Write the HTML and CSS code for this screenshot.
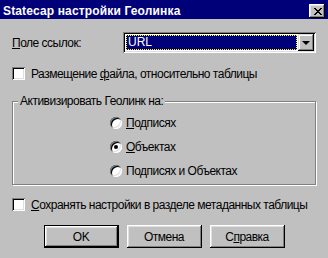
FILE: index.html
```html
<!DOCTYPE html>
<html lang="ru">
<head>
<meta charset="utf-8">
<title>Statecap настройки Геолинка</title>
<link rel="stylesheet" href="styles.css">
</head>
<body>
<div class="dialog">
  <div class="titlebar">
    <span class="title">Statecap настройки Геолинка</span>
    <span class="close">
      <svg width="8" height="7" viewBox="0 0 8 7"><path d="M0 0h2v1h1v1h2v-1h1v-1h2v1h-1v1h-1v1h-1v1h1v1h1v1h1v1h-2v-1h-1v-1h-2v1h-1v1h-2v-1h1v-1h1v-1h1v-1h-1v-1h-1v-1h-1z" fill="#000"/></svg>
    </span>
  </div>
  <div class="content">
    <div class="field-row">
      <span class="field-label"><u>П</u>оле ссылок:</span>
      <div class="combo">
        <div class="combo-value"><span class="sel">URL</span></div>
        <span class="combo-btn"><span class="arrow"></span></span>
      </div>
    </div>
    <div class="check-row first">
      <span class="checkbox"></span>
      <span>Размещение <u>ф</u>айла, относительно таблицы</span>
    </div>
    <div class="group">
      <span class="group-label">Активизировать Геолинк на:</span>
      <div class="radio-row"><span class="radio"></span><span><u>П</u>одписях</span></div>
      <div class="radio-row"><span class="radio checked"></span><span><u>О</u>бъектах</span></div>
      <div class="radio-row"><span class="radio"></span><span>Подписях и Объектах</span></div>
    </div>
    <div class="check-row second">
      <span class="checkbox"></span>
      <span><u>С</u>охранять настройки в разделе метаданных таблицы</span>
    </div>
    <div class="buttons">
      <span class="btn default">OK</span>
      <span class="btn">Отмена</span>
      <span class="btn">С<u>п</u>равка</span>
    </div>
  </div>
</div>
</body>
</html>
```

FILE: styles.css
```css
html, body {
  margin: 0;
  padding: 0;
}
body {
  width: 328px;
  height: 258px;
  overflow: hidden;
  background: #c0c0c0;
  font-family: "Liberation Sans", Arial, sans-serif;
  font-size: 12px;
  letter-spacing: -0.5px;
  color: #000;
}
u {
  text-decoration: underline;
  text-underline-offset: 1px;
}
.dialog {
  width: 328px;
  height: 258px;
  display: flex;
  flex-direction: column;
  background: #c0c0c0;
}
.titlebar {
  height: 19px;
  box-sizing: border-box;
  padding: 3px 3px 0 3px;
  background: #000078;
  display: flex;
  align-items: center;
  justify-content: space-between;
}
.title {
  color: #fff;
  font-weight: bold;
  font-size: 12px;
  letter-spacing: 0.15px;
  line-height: 14px;
}
.close {
  width: 16px;
  height: 14px;
  box-sizing: border-box;
  background: #c0c0c0;
  box-shadow: inset -1px -1px 0 #000, inset 1px 1px 0 #fff, inset -2px -2px 0 #808080, inset 2px 2px 0 #dfdfdf;
  display: flex;
  align-items: center;
  justify-content: center;
  padding-left: 1px;
}
.close svg {
  display: block;
}
.content {
  padding: 0 12px;
  display: flex;
  flex-direction: column;
}
.field-row {
  display: flex;
  align-items: center;
  height: 21px;
  margin-top: 13px;
}
.field-label {
  width: 111px;
  line-height: 14px;
}
.combo {
  width: 193px;
  height: 21px;
  box-sizing: border-box;
  padding: 2px;
  background: #fff;
  box-shadow: inset 1px 1px 0 #808080, inset -1px -1px 0 #fff, inset 2px 2px 0 #000, inset -2px -2px 0 #dfdfdf;
  display: flex;
}
.combo-value {
  flex: 1;
  padding: 1px;
  display: flex;
}
.sel {
  flex: 1;
  background: #000078;
  color: #fff;
  border: 1px dotted #ffff00;
  padding: 0 1px;
  line-height: 13px;
  letter-spacing: 0;
}
.combo-btn {
  width: 16px;
  height: 17px;
  box-sizing: border-box;
  background: #c0c0c0;
  box-shadow: inset -1px -1px 0 #000, inset 1px 1px 0 #dfdfdf, inset -2px -2px 0 #808080, inset 2px 2px 0 #fff;
  display: flex;
  align-items: center;
  justify-content: center;
}
.arrow {
  width: 0;
  height: 0;
  border-left: 4px solid transparent;
  border-right: 4px solid transparent;
  border-top: 4px solid #000;
  margin-top: 1px;
}
.check-row {
  display: flex;
  align-items: center;
  height: 13px;
  line-height: 14px;
  white-space: nowrap;
}
.check-row.first {
  margin-top: 14px;
}
.check-row.second {
  margin-top: 13px;
}
.checkbox {
  width: 13px;
  height: 13px;
  flex: none;
  box-sizing: border-box;
  background: #fff;
  box-shadow: inset 1px 1px 0 #808080, inset -1px -1px 0 #fff, inset 2px 2px 0 #000, inset -2px -2px 0 #dfdfdf;
  margin-right: 6px;
}
.group {
  position: relative;
  margin-top: 21px;
  height: 84px;
  box-sizing: border-box;
  border: 1px solid #808080;
  box-shadow: inset 1px 1px 0 #fff, 1px 1px 0 #fff;
  padding: 13px 0 0 97px;
  display: flex;
  flex-direction: column;
  gap: 8px;
}
.group-label {
  position: absolute;
  top: -8px;
  left: 5px;
  padding: 0 2px;
  background: #c0c0c0;
  line-height: 15px;
  white-space: nowrap;
}
.radio-row {
  display: flex;
  align-items: center;
  height: 16px;
  line-height: 14px;
}
.radio {
  width: 12px;
  height: 12px;
  flex: none;
  border-radius: 50%;
  background: #fff;
  box-shadow: inset 1px 1px 0 #808080, inset -1px -1px 0 #fff, inset 2px 2px 0 #000, inset -2px -2px 0 #dfdfdf;
  margin-right: 4px;
  display: flex;
  align-items: center;
  justify-content: center;
}
.radio.checked::after {
  content: "";
  width: 4px;
  height: 4px;
  border-radius: 50%;
  background: #000;
}
.buttons {
  display: flex;
  justify-content: center;
  gap: 8px;
  margin-top: 14px;
}
.btn {
  width: 75px;
  height: 23px;
  box-sizing: border-box;
  background: #c0c0c0;
  box-shadow: inset -1px -1px 0 #000, inset 1px 1px 0 #fff, inset -2px -2px 0 #808080, inset 2px 2px 0 #dfdfdf;
  display: flex;
  align-items: center;
  justify-content: center;
  line-height: 14px;
}
.btn.default {
  border: 1px solid #000;
}
```
